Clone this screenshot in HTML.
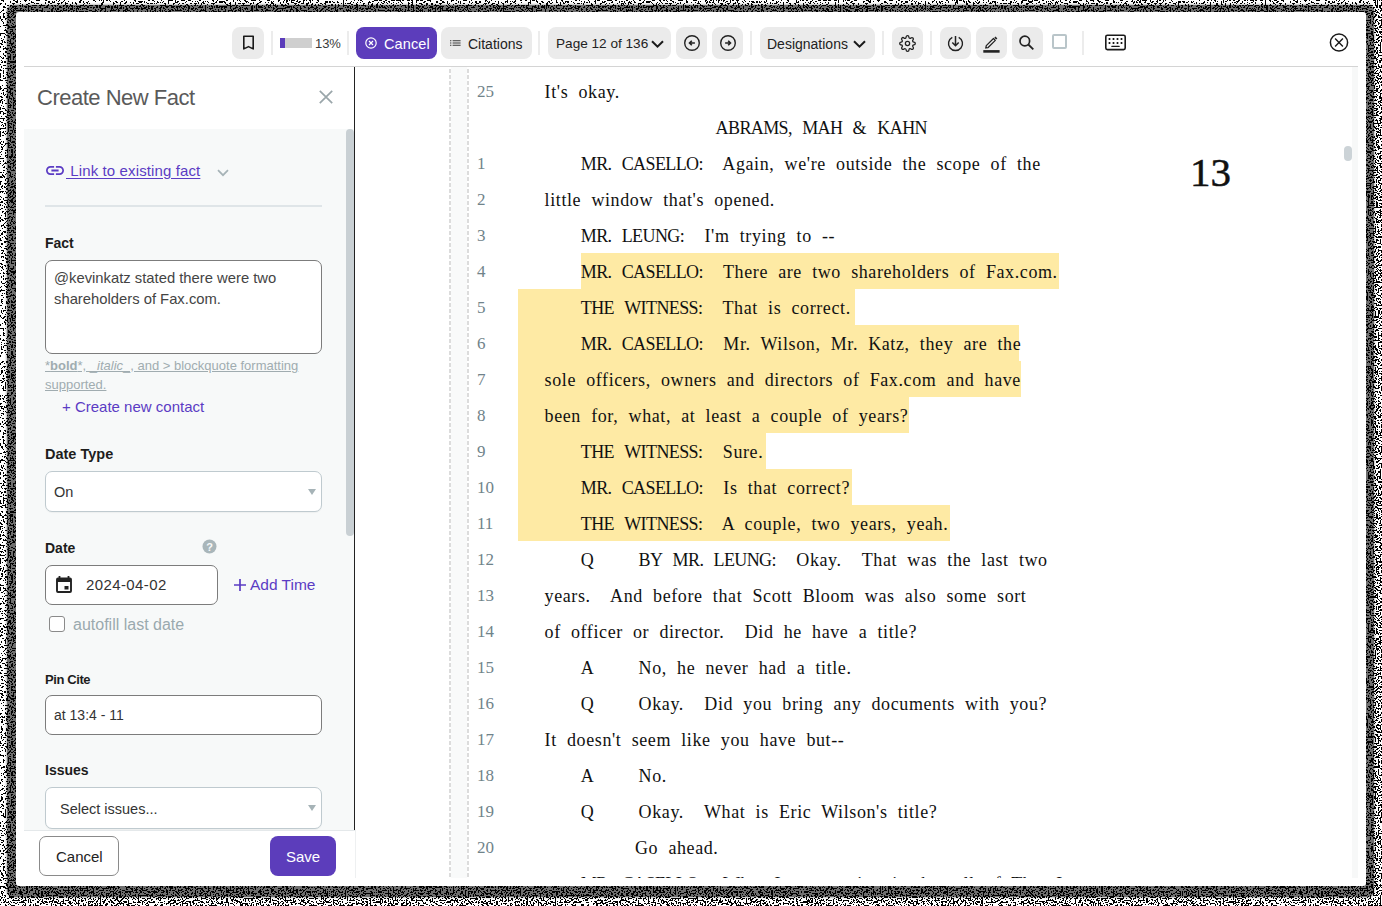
<!DOCTYPE html>
<html><head><meta charset="utf-8">
<style>
*{box-sizing:border-box;margin:0;padding:0}
html,body{width:1382px;height:906px;overflow:hidden;background:#fff;font-family:"Liberation Sans",sans-serif;color:#222}
.a{position:absolute}
#bg{left:0;top:0;width:1382px;height:906px;background:#bcbcbc}

#dk{left:7px;top:5px;width:1367px;height:892px;background:rgba(0,0,0,.57);border-radius:6px;box-shadow:0 0 2px 1px rgba(0,0,0,.25)}
#win{left:16px;top:12px;width:1350px;height:874px;background:#fff;border-radius:3px}
.btn{position:absolute;top:27px;height:32px;background:#ebebeb;border-radius:8px}
.sep{position:absolute;top:31px;height:24px;width:2px;background:#ececec}
.tt{position:absolute;font-size:14px;color:#222;white-space:nowrap;line-height:16px}

svg{position:absolute;overflow:visible}
/* panel */
#panel{left:24px;top:67px;width:330px;height:763px;background:#f7f9f9}
#phead{left:24px;top:67px;width:330px;height:62px;background:#fff}
.lbl{position:absolute;font-weight:bold;font-size:14px;color:#1d1d1d;white-space:nowrap;line-height:16px}
.inp{position:absolute;background:#fff;border:1px solid #7c7c7c;border-radius:7px}
.sel{position:absolute;background:#fff;border:1.3px solid #bfcacf;border-radius:7px;box-shadow:0 1px 1px rgba(0,0,0,.04)}
.itx{position:absolute;font-size:14px;color:#333;white-space:nowrap;line-height:16px}
/* doc */
.ln{position:absolute;left:477px;width:24px;font-family:"Liberation Serif",serif;font-size:17px;color:#70838a;line-height:36px;height:36px;white-space:pre}
.tx{position:absolute;font-family:"Liberation Serif",serif;font-size:18px;color:#111;line-height:36px;height:36px;white-space:pre;letter-spacing:0.6px;word-spacing:0px}
.hl{position:absolute;background:#feeaa4}
.c{letter-spacing:-0.6px}
</style></head><body>
<svg class="a" style="left:0;top:0" width="1382" height="906"><defs><filter id="nz" x="0" y="0" width="1382" height="906" filterUnits="userSpaceOnUse" color-interpolation-filters="sRGB"><feTurbulence type="fractalNoise" baseFrequency="0.6" numOctaves="1" seed="11" result="n"/><feColorMatrix in="n" type="matrix" values="1 0 0 0 0  1 0 0 0 0  1 0 0 0 0  0 0 0 0 1" result="g"/><feComposite in="SourceGraphic" in2="g" operator="arithmetic" k1="0" k2="1" k3="4" k4="-2" result="s"/><feComponentTransfer in="s"><feFuncR type="discrete" tableValues="0 1"/><feFuncG type="discrete" tableValues="0 1"/><feFuncB type="discrete" tableValues="0 1"/></feComponentTransfer></filter></defs><g filter="url(#nz)"><rect x="0" y="0" width="1382" height="906" fill="rgb(200,200,200)"/><rect x="1374" y="0" width="8" height="906" fill="rgb(145,145,145)"/><rect x="0" y="897" width="1382" height="9" fill="rgb(155,155,155)"/><rect x="7" y="5" width="1367" height="892" fill="rgb(150,150,150)"/></g></svg>
<div id="dk" class="a"></div>
<div id="win" class="a"></div>

<!-- toolbar -->
<div class="btn" style="left:232px;width:32px"></div>
<svg style="left:240px;top:35px" width="17" height="16" viewBox="0 0 17 16"><path d="M3.8 1.3h9.4v12.6l-4.7-2.3-4.7 2.3z" fill="none" stroke="#1a1a1a" stroke-width="1.6" stroke-linejoin="round"/></svg>
<div class="sep" style="left:271px"></div>
<div class="a" style="left:280px;top:38px;width:32px;height:10px;background:#cfcfcf"></div>
<div class="a" style="left:280px;top:38px;width:5px;height:10px;background:#5b3cba"></div>
<div class="tt" style="left:315px;top:35.5px;font-size:13px;letter-spacing:-0.1px;color:#3a3a3a">13%</div>
<div class="sep" style="left:347px"></div>
<div class="btn" style="left:356px;width:81px;background:#5c3dbb"></div>
<svg style="left:365px;top:37px" width="12" height="12" viewBox="0 0 12 12"><circle cx="6" cy="6" r="5.2" fill="none" stroke="#fff" stroke-width="1.2"/><path d="M4 4l4 4M8 4l-4 4" stroke="#fff" stroke-width="1.2"/></svg>
<div class="tt" style="left:384px;top:36px;color:#fff;font-size:14.5px;letter-spacing:0.1px">Cancel</div>
<div class="btn" style="left:441px;width:91px"></div>
<svg style="left:450px;top:40px" width="11" height="6" viewBox="0 0 11 6"><path d="M0 0.7h1.4M0 3h1.4M0 5.3h1.4M2.6 0.7h8M2.6 3h8M2.6 5.3h8" stroke="#3a3a3a" stroke-width="1.1"/></svg>
<div class="tt" style="left:468px;top:36px">Citations</div>
<div class="sep" style="left:538px"></div>
<div class="btn" style="left:548px;width:123px"></div>
<div class="tt" style="left:556px;top:36px;font-size:13.6px">Page 12 of 136</div>
<svg style="left:651px;top:40px" width="13" height="8" viewBox="0 0 13 8"><path d="M1 1.2l5.5 5.5 5.5-5.5" fill="none" stroke="#1a1a1a" stroke-width="2"/></svg>
<div class="btn" style="left:676px;width:31px"></div>
<svg style="left:683.6px;top:35px" width="16" height="16" viewBox="0 0 16 16"><circle cx="8" cy="8" r="7.3" fill="none" stroke="#222" stroke-width="1.4"/><path d="M10.9 8h-5.2M7.8 5.7L5.5 8l2.3 2.3" fill="none" stroke="#222" stroke-width="1.6"/></svg>
<div class="btn" style="left:712px;width:31px"></div>
<svg style="left:719.6px;top:35px" width="16" height="16" viewBox="0 0 16 16"><circle cx="8" cy="8" r="7.3" fill="none" stroke="#222" stroke-width="1.4"/><path d="M5.1 8h5.2M8.2 5.7L10.5 8l-2.3 2.3" fill="none" stroke="#222" stroke-width="1.6"/></svg>
<div class="sep" style="left:750px"></div>
<div class="btn" style="left:760px;width:115px"></div>
<div class="tt" style="left:767px;top:36px">Designations</div>
<svg style="left:853px;top:40px" width="13" height="8" viewBox="0 0 13 8"><path d="M1 1.2l5.5 5.5 5.5-5.5" fill="none" stroke="#1a1a1a" stroke-width="2"/></svg>
<div class="sep" style="left:882px"></div>
<div class="btn" style="left:892px;width:31px"></div>
<svg style="left:899px;top:35px" width="17" height="17" viewBox="0 0 24 24"><path d="M12 15a3 3 0 1 0 0-6 3 3 0 0 0 0 6z" fill="none" stroke="#222" stroke-width="1.8"/><path d="M19.4 15a1.65 1.65 0 0 0 .33 1.82l.06.06a2 2 0 1 1-2.83 2.83l-.06-.06a1.65 1.65 0 0 0-1.82-.33 1.65 1.65 0 0 0-1 1.51V21a2 2 0 1 1-4 0v-.09A1.65 1.65 0 0 0 9 19.4a1.65 1.65 0 0 0-1.82.33l-.06.06a2 2 0 1 1-2.83-2.83l.06-.06A1.65 1.65 0 0 0 4.68 15a1.65 1.65 0 0 0-1.51-1H3a2 2 0 1 1 0-4h.09A1.65 1.65 0 0 0 4.6 9a1.65 1.65 0 0 0-.33-1.82l-.06-.06a2 2 0 1 1 2.83-2.83l.06.06A1.65 1.65 0 0 0 9 4.68a1.65 1.65 0 0 0 1-1.51V3a2 2 0 1 1 4 0v.09a1.65 1.65 0 0 0 1 1.51 1.65 1.65 0 0 0 1.82-.33l.06-.06a2 2 0 1 1 2.83 2.83l-.06.06A1.65 1.65 0 0 0 19.4 9a1.65 1.65 0 0 0 1.51 1H21a2 2 0 1 1 0 4h-.09a1.65 1.65 0 0 0-1.51 1z" fill="none" stroke="#222" stroke-width="1.8"/></svg>
<div class="sep" style="left:930px"></div>
<div class="btn" style="left:940px;width:31px"></div>
<svg style="left:947px;top:35px" width="17" height="17" viewBox="0 0 17 17"><path d="M5.3 2.3A7 7 0 1 0 11.7 2.3" fill="none" stroke="#222" stroke-width="1.4"/><path d="M8.5 1v9.5M5.3 7.5l3.2 3.2 3.2-3.2" fill="none" stroke="#222" stroke-width="1.5"/></svg>
<div class="btn" style="left:976px;width:31px"></div>
<svg style="left:983px;top:36px" width="17" height="17" viewBox="0 0 17 17"><path d="M2.8 12L3.28 9.68L10.48 2.48L12.32 4.32L5.12 11.52Z" fill="none" stroke="#222" stroke-width="1.25" stroke-linejoin="round"/><path d="M11.3 1.7L12.5 0.5L14.4 2.4L13.2 3.6Z" fill="#222"/><rect x="0.3" y="14.1" width="16.3" height="2.6" fill="#222"/></svg>
<div class="btn" style="left:1012px;width:31px"></div>
<svg style="left:1017px;top:34px" width="18" height="17" viewBox="0 0 18 17"><circle cx="7.8" cy="7" r="4.8" fill="none" stroke="#222" stroke-width="1.7"/><path d="M11.3 10.5l5 4.8" stroke="#222" stroke-width="1.8"/></svg>
<div class="a" style="left:1052px;top:34px;width:15px;height:15px;border:2px solid #b9c5c9;border-radius:2px"></div>
<div class="sep" style="left:1082px"></div>
<svg style="left:1105px;top:34px" width="21" height="17" viewBox="0 0 21 17"><rect x="0.8" y="1.2" width="19.4" height="14.4" rx="1.6" fill="none" stroke="#1a1a1a" stroke-width="1.6"/><path d="M4.5 4.1v1.8M8.5 4.1v1.8M12.5 4.1v1.8M16.5 4.1v1.8M4.5 8.1v1.8M8.5 8.1v1.8M12.5 8.1v1.8M16.5 8.1v1.8" stroke="#1a1a1a" stroke-width="1.7"/><path d="M6.8 12.4h7.4" stroke="#1a1a1a" stroke-width="1.1" stroke-linecap="round"/></svg>
<svg style="left:1329px;top:32px" width="20" height="21" viewBox="0 0 20 21"><circle cx="10" cy="10.5" r="8.6" fill="none" stroke="#1a1a1a" stroke-width="1.5"/><path d="M6.1 6.6l7.8 7.8M13.9 6.6l-7.8 7.8" stroke="#1a1a1a" stroke-width="1.4"/></svg>
<div class="a" style="left:24px;top:66px;width:1334px;height:1px;background:#d4d4d4"></div>

<!-- right scrollbar -->
<div class="a" style="left:1352px;top:67px;width:6px;height:811px;background:#f7f8f8"></div>
<div class="a" style="left:1344px;top:146px;width:8px;height:15px;background:#ccd3d7;border-radius:4px"></div>

<!-- left panel -->
<div id="panel" class="a"></div>
<div id="phead" class="a"></div>
<div class="a" style="left:354px;top:67px;width:1px;height:763px;background:#222"></div>
<div class="a" style="left:346px;top:129px;width:7.5px;height:407px;background:#c9d0d4;border-radius:4px"></div>
<div class="tt" style="left:37px;top:86px;font-size:22px;letter-spacing:-0.5px;line-height:24px;color:#5a5a5a">Create New Fact</div>
<svg style="left:319px;top:90px" width="14" height="14" viewBox="0 0 14 14"><path d="M0.8 0.8l12.4 12.4M13.2 0.8L0.8 13.2" stroke="#9aa6aa" stroke-width="1.7"/></svg>

<svg style="left:46px;top:166px" width="18" height="9" viewBox="2 7 20 10"><path d="M3.9 12c0-1.71 1.39-3.1 3.1-3.1h4V7H7c-2.76 0-5 2.24-5 5s2.24 5 5 5h4v-1.9H7c-1.71 0-3.1-1.39-3.1-3.1zM8 13h8v-2H8v2zm9-6h-4v1.9h4c1.71 0 3.1 1.39 3.1 3.1s-1.39 3.1-3.1 3.1h-4V17h4c2.76 0 5-2.24 5-5s-2.24-5-5-5z" fill="#5b3cc4"/></svg>
<div class="tt" style="left:66px;top:163px;font-size:15px;letter-spacing:0.12px;color:#5b3cc4;text-decoration:underline;text-underline-offset:2px;white-space:pre"> Link to existing fact</div>
<svg style="left:217px;top:169px" width="12" height="8" viewBox="0 0 12 8"><path d="M1 1.2l5 5 5-5" fill="none" stroke="#a6b3b7" stroke-width="1.7"/></svg>
<div class="a" style="left:45px;top:205px;width:277px;height:2px;background:#dfe5e8"></div>

<div class="lbl" style="left:45px;top:235px">Fact</div>
<div class="inp" style="left:45px;top:260px;width:277px;height:94px"></div>
<div class="itx" style="left:54px;top:268px;font-size:14.8px;line-height:21px;color:#444">@kevinkatz stated there were two<br>shareholders of Fax.com.</div>
<div class="tt" style="left:45px;top:356px;font-size:13px;line-height:19px;color:#a0acb0;text-decoration:underline">*<b>bold</b>*, _<i>italic</i>_, and &gt; blockquote formatting<br>supported.</div>
<div class="tt" style="left:62px;top:399px;font-size:15px;color:#5b3cc4">+ Create new contact</div>

<div class="lbl" style="left:45px;top:446px;font-size:14.5px">Date Type</div>
<div class="sel" style="left:45px;top:471px;width:277px;height:41px"></div>
<div class="itx" style="left:54px;top:484px;font-size:14.5px">On</div>
<svg style="left:307px;top:488px" width="10" height="8" viewBox="0 0 10 8"><path d="M1 1h8L5 7z" fill="#a6b3b7"/></svg>

<div class="lbl" style="left:45px;top:540px">Date</div>
<svg style="left:202px;top:539px" width="15" height="15" viewBox="0 0 15 15"><circle cx="7.5" cy="7.5" r="7" fill="#a9b6ba"/><text x="7.5" y="11.8" font-family="Liberation Sans" font-size="11" font-weight="bold" fill="#f7f9f9" text-anchor="middle">?</text></svg>
<div class="inp" style="left:45px;top:565px;width:173px;height:40px"></div>
<svg style="left:56px;top:576px" width="16" height="17" viewBox="0 0 16 17"><path d="M3.5 0v3M12.5 0v3" stroke="#222" stroke-width="1.8"/><rect x="1" y="2.5" width="14" height="13.5" rx="1" fill="none" stroke="#222" stroke-width="1.9"/><rect x="1" y="2.5" width="14" height="3.5" fill="#222"/><rect x="8.5" y="10" width="4" height="3.5" fill="#222"/></svg>
<div class="itx" style="left:86px;top:577px;font-size:15px;letter-spacing:0.4px">2024-04-02</div>
<svg style="left:234px;top:579px" width="12" height="12" viewBox="0 0 12 12"><path d="M6 0v12M0 6h12" stroke="#5b3cc4" stroke-width="1.7"/></svg><div class="tt" style="left:250px;top:577px;font-size:15.5px;color:#5b3cc4">Add Time</div>
<div class="a" style="left:49px;top:616px;width:16px;height:16px;border:1px solid #8a8a8a;border-radius:3px;background:#fff"></div>
<div class="tt" style="left:73px;top:617px;font-size:16px;color:#9aa9ae">autofill last date</div>

<div class="lbl" style="left:45px;top:672px;font-size:13px;letter-spacing:-0.4px">Pin Cite</div>
<div class="inp" style="left:45px;top:695px;width:277px;height:40px"></div>
<div class="itx" style="left:54px;top:707px">at 13:4 - 11</div>

<div class="lbl" style="left:45px;top:762px">Issues</div>
<div class="sel" style="left:45px;top:787px;width:277px;height:42px"></div>
<div class="itx" style="left:60px;top:801px;font-size:14.5px">Select issues...</div>
<svg style="left:307px;top:804px" width="10" height="8" viewBox="0 0 10 8"><path d="M1 1h8L5 7z" fill="#a6b3b7"/></svg>

<!-- footer -->
<div class="a" style="left:355px;top:830px;width:1px;height:48px;background:#eef0f1"></div>
<div class="a" style="left:24px;top:830px;width:331px;height:48px;background:#fff;border-top:1px solid #e4e8ea"></div>
<div class="a" style="left:39px;top:836px;width:80px;height:40px;border:1px solid #8a8a8a;border-radius:7px;background:#fff"></div>
<div class="tt" style="left:56px;top:849px;font-size:15px;color:#222">Cancel</div>
<div class="a" style="left:270px;top:836px;width:66px;height:40px;background:#5c3dbb;border-radius:8px"></div>
<div class="tt" style="left:286px;top:849px;font-size:15px;color:#fff">Save</div>

<!-- document -->
<div class="a" style="left:355px;top:67px;width:997px;height:811px;overflow:hidden" id="doc">
<div class="a" style="left:-355px;top:-67px;width:1382px;height:906px">
<div class="a" style="left:449px;top:69px;width:2px;height:809px;background:repeating-linear-gradient(to bottom,#dcdcdc 0 4px,transparent 4px 6px)"></div>
<div class="a" style="left:451px;top:67px;width:16px;height:811px;background:#f9fafa"></div>
<div class="a" style="left:467px;top:69px;width:2px;height:809px;background:repeating-linear-gradient(to bottom,#dcdcdc 0 4px,transparent 4px 6px)"></div>
<div class="hl" style="left:580.6px;top:253px;width:478.4px;height:36px"></div>
<div class="hl" style="left:517.6px;top:289px;width:337.0px;height:36px"></div>
<div class="hl" style="left:517.6px;top:325px;width:501.9px;height:36px"></div>
<div class="hl" style="left:517.6px;top:361px;width:503.4px;height:36px"></div>
<div class="hl" style="left:517.6px;top:397px;width:391.4px;height:36px"></div>
<div class="hl" style="left:517.6px;top:433px;width:248.9px;height:36px"></div>
<div class="hl" style="left:517.6px;top:469px;width:334.0px;height:36px"></div>
<div class="hl" style="left:517.6px;top:505px;width:432.7px;height:36px"></div>
<div class="ln" style="top:74px">25</div>
<div class="tx" id="l0" style="left:544.6px;top:74px">It&#39;s  okay.</div>
<div class="tx" id="l1" style="left:715.6px;top:110px"><span class="c">ABRAMS,</span>  <span class="c">MAH</span>  &amp;  <span class="c">KAHN</span></div>
<div class="ln" style="top:146px">1</div>
<div class="tx" id="l2" style="left:580.8px;top:146px"><span class="c">MR.</span>  <span class="c">CASELLO:</span>    Again,  we&#39;re  outside  the  scope  of  the</div>
<div class="ln" style="top:182px">2</div>
<div class="tx" id="l3" style="left:544.6px;top:182px">little  window  that&#39;s  opened.</div>
<div class="ln" style="top:218px">3</div>
<div class="tx" id="l4" style="left:580.8px;top:218px"><span class="c">MR.</span>  <span class="c">LEUNG:</span>    I&#39;m  trying  to  --</div>
<div class="ln" style="top:254px">4</div>
<div class="tx" id="l5" style="left:580.8px;top:254px"><span class="c">MR.</span>  <span class="c">CASELLO:</span>    There  are  two  shareholders  of  Fax.com.</div>
<div class="ln" style="top:290px">5</div>
<div class="tx" id="l6" style="left:580.8px;top:290px"><span class="c">THE</span>  <span class="c">WITNESS:</span>    That  is  correct.</div>
<div class="ln" style="top:326px">6</div>
<div class="tx" id="l7" style="left:580.8px;top:326px"><span class="c">MR.</span>  <span class="c">CASELLO:</span>    Mr.  Wilson,  Mr.  Katz,  they  are  the</div>
<div class="ln" style="top:362px">7</div>
<div class="tx" id="l8" style="left:544.6px;top:362px">sole  officers,  owners  and  directors  of  Fax.com  and  have</div>
<div class="ln" style="top:398px">8</div>
<div class="tx" id="l9" style="left:544.6px;top:398px">been  for,  what,  at  least  a  couple  of  years?</div>
<div class="ln" style="top:434px">9</div>
<div class="tx" id="l10" style="left:580.8px;top:434px"><span class="c">THE</span>  <span class="c">WITNESS:</span>    Sure.</div>
<div class="ln" style="top:470px">10</div>
<div class="tx" id="l11" style="left:580.8px;top:470px"><span class="c">MR.</span>  <span class="c">CASELLO:</span>    Is  that  correct?</div>
<div class="ln" style="top:506px">11</div>
<div class="tx" id="l12" style="left:580.8px;top:506px"><span class="c">THE</span>  <span class="c">WITNESS:</span>    A  couple,  two  years,  yeah.</div>
<div class="ln" style="top:542px">12</div>
<div class="tx" id="l13" style="left:580.8px;top:542px">Q</div>
<div class="tx" id="e13" style="left:638.6px;top:542px"><span class="c">BY</span>  <span class="c">MR.</span>  <span class="c">LEUNG:</span>    Okay.    That  was  the  last  two</div>
<div class="ln" style="top:578px">13</div>
<div class="tx" id="l14" style="left:544.6px;top:578px">years.    And  before  that  Scott  Bloom  was  also  some  sort</div>
<div class="ln" style="top:614px">14</div>
<div class="tx" id="l15" style="left:544.6px;top:614px">of  officer  or  director.    Did  he  have  a  title?</div>
<div class="ln" style="top:650px">15</div>
<div class="tx" id="l16" style="left:580.8px;top:650px">A</div>
<div class="tx" id="e16" style="left:638.6px;top:650px">No,  he  never  had  a  title.</div>
<div class="ln" style="top:686px">16</div>
<div class="tx" id="l17" style="left:580.8px;top:686px">Q</div>
<div class="tx" id="e17" style="left:638.6px;top:686px">Okay.    Did  you  bring  any  documents  with  you?</div>
<div class="ln" style="top:722px">17</div>
<div class="tx" id="l18" style="left:544.6px;top:722px">It  doesn&#39;t  seem  like  you  have  but--</div>
<div class="ln" style="top:758px">18</div>
<div class="tx" id="l19" style="left:580.8px;top:758px">A</div>
<div class="tx" id="e19" style="left:638.6px;top:758px">No.</div>
<div class="ln" style="top:794px">19</div>
<div class="tx" id="l20" style="left:580.8px;top:794px">Q</div>
<div class="tx" id="e20" style="left:638.6px;top:794px">Okay.    What  is  Eric  Wilson&#39;s  title?</div>
<div class="ln" style="top:830px">20</div>
<div class="tx" id="l21" style="left:635px;top:830px">Go  ahead.</div>
<div class="ln" style="top:866px">21</div>
<div class="tx" id="l22" style="left:580.8px;top:866px"><span class="c">MR.</span>  <span class="c">CASELLO:</span>    What  I  was  saying  is  that  all  of  The,  I</div>
<div class="a" style="left:1190px;top:148px;font-family:'Liberation Serif',serif;font-size:41px;line-height:48px;color:#111;-webkit-text-stroke:0.5px #111">13</div>
</div>
</div>
</body></html>
